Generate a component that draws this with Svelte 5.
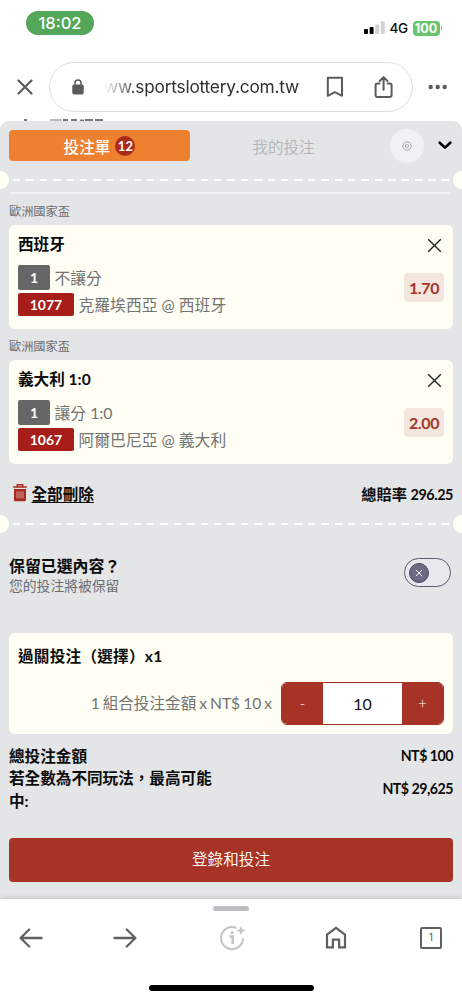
<script>
  let keepSelection = false;
  let stake = 10;

  const bets = [
    { league: "歐洲國家盃", pick: "西班牙", market: "不讓分", code: "1077", match: "克羅埃西亞 @ 西班牙", odds: "1.70" },
    { league: "歐洲國家盃", pick: "義大利 1:0", market: "讓分 1:0", code: "1067", match: "阿爾巴尼亞 @ 義大利", odds: "2.00" },
  ];
</script>

<div class="phone">
  <div class="status">
    <span class="clock">18:02</span>
    <div class="signal">
      <svg width="21" height="14" viewBox="0 0 21 14">
        <rect x="0" y="8" width="4" height="5" rx="1" fill="#000" />
        <rect x="5.6" y="6" width="4" height="7" rx="1" fill="#000" />
        <rect x="11.2" y="3.5" width="4" height="9.5" rx="1" fill="#d2d2d2" />
        <rect x="16.8" y="0.5" width="4" height="12.5" rx="1" fill="#d2d2d2" />
      </svg>
      <span class="network">4G</span>
      <span class="battery">100</span>
      <span class="battery-tip"></span>
    </div>
  </div>

  <div class="toolbar">
    <svg class="close-tab" width="16" height="16" viewBox="0 0 16 16">
      <path d="M1.5 1.5l13 13M14.5 1.5l-13 13" stroke="#5a5b5f" stroke-width="2.2" stroke-linecap="round" />
    </svg>
    <div class="address">
      <svg class="lock" width="12" height="16" viewBox="0 0 12 16">
        <rect x="0.3" y="5.6" width="11.4" height="9.8" rx="1.6" fill="#5a5b5f" />
        <path d="M3 6V4a3 3 0 0 1 6 0v2" fill="none" stroke="#5a5b5f" stroke-width="1.5" />
      </svg>
      <span class="url">ww.sportslottery.com.tw</span>
      <svg class="bookmark" width="18" height="22" viewBox="0 0 18 22" fill="none" stroke="#5a5b5f" stroke-width="2" stroke-linejoin="round">
        <path d="M1.8 1.8h14.2v18l-7.1-3.6-7.1 3.6z" />
      </svg>
      <svg class="share" width="20" height="24" viewBox="0 0 20 24" fill="none" stroke="#5a5b5f" stroke-width="2" stroke-linecap="round" stroke-linejoin="round">
        <path d="M5.6 8.6H3.4a1.8 1.8 0 0 0-1.8 1.8v9.8A1.8 1.8 0 0 0 3.4 22h12.4a1.8 1.8 0 0 0 1.8-1.8v-9.8a1.8 1.8 0 0 0-1.8-1.8h-2.2M9.6 14.8V2.4M5.7 6l3.9-3.9L13.5 6" />
      </svg>
    </div>
    <svg class="more" width="20" height="6" viewBox="0 0 20 6" fill="#5a5b5f">
      <circle cx="2.7" cy="3" r="2.2" /><circle cx="9.7" cy="3" r="2.2" /><circle cx="16.7" cy="3" r="2.2" />
    </svg>
  </div>

  <!-- sliver of the page still visible above the slip -->
  <svg class="page-edge" width="462" height="9" viewBox="0 0 462 9" fill="#77787a">
    <path d="M24 7h3v2h-3zM50 7.5h12v1H50zM63 7h5v2h-5zM71 7h6v2h-6zM80 7.5h4v1.5h-4zM85 7h8v2h-8zM95 7h8v2h-8z" />
  </svg>

  <div class="slip">
    <div class="tabs">
      <div class="tab active">投注單 <span class="count">12</span></div>
      <div class="tab">我的投注</div>
      <div class="settings">
        <svg width="10" height="10" viewBox="0 0 10 10" fill="none" stroke="#a6a6a9" stroke-width="0.9">
          <path d="M4.1.7h1.8l.4 1.1 1.1-.4 1.2 1.2-.4 1.1 1.1.4v1.8l-1.1.4.4 1.1-1.2 1.2-1.1-.4-.4 1.1H4.1l-.4-1.1-1.1.4-1.2-1.2.4-1.1-1.1-.4V4.1l1.1-.4-.4-1.1 1.2-1.2 1.1.4z" />
          <circle cx="5" cy="5" r="1.6" />
        </svg>
      </div>
      <svg class="chevron" width="14" height="9" viewBox="0 0 14 9">
        <path d="M1.7 1.7L7 6.6l5.3-4.9" fill="none" stroke="#000" stroke-width="2.6" stroke-linecap="round" stroke-linejoin="round" />
      </svg>
    </div>

    <div class="tear"><span class="notch"></span><span class="dashes"></span><span class="notch"></span></div>
    <div class="rule"></div>

    {#each bets as bet}
      <div class="league">{bet.league}</div>
      <div class="card bet">
        <div class="bet-head">
          <span>{bet.pick}</span>
          <svg width="15" height="15" viewBox="0 0 15 15">
            <path d="M1.2 1.2l12.6 12.6M13.8 1.2L1.2 13.8" stroke="#222" stroke-width="1.35" />
          </svg>
        </div>
        <div class="bet-body">
          <div>
            <div class="line market"><span class="tag">1</span>{bet.market}</div>
            <div class="line match"><span class="tag code">{bet.code}</span>{bet.match}</div>
          </div>
          <span class="odds">{bet.odds}</span>
        </div>
      </div>
    {/each}

    <div class="totals">
      <div class="clear">
        <svg width="14" height="18" viewBox="0 0 14 18">
          <path d="M4.3 2.3V.8h5.4v1.5M.2 3h13.6" fill="none" stroke="#a92b1f" stroke-width="1.5" />
          <path d="M1 5h12v11a1.2 1.2 0 0 1-1.2 1.2H2.2A1.2 1.2 0 0 1 1 16z" fill="#a92b1f" />
          <path d="M4 7.4v7M6 7.4v7M8 7.4v7M10 7.4v7" stroke="#e0b9b5" stroke-width="0.8" />
        </svg>
        <span>全部刪除</span>
      </div>
      <div>總賠率 <span class="total-odds">296.25</span></div>
    </div>

    <div class="tear"><span class="notch"></span><span class="dashes"></span><span class="notch"></span></div>

    <div class="keep">
      <div>
        <div class="keep-title">保留已選內容？</div>
        <div class="keep-note">您的投注將被保留</div>
      </div>
      <div class="toggle" class:on={keepSelection}>
        <span class="knob">
          <svg width="8" height="8" viewBox="0 0 8 8">
            <path d="M.8.8l6.4 6.4M7.2.8L.8 7.2" stroke="#fff" stroke-width="1" />
          </svg>
        </span>
      </div>
    </div>

    <div class="card parlay">
      <div class="parlay-title">過關投注（選擇）x1</div>
      <div class="stake">
        <span>1 組合投注金額 x NT$ 10 x</span>
        <div class="stepper">
          <span class="step">-</span>
          <span class="amount">{stake}</span>
          <span class="step">+</span>
        </div>
      </div>
    </div>

    <div class="summary">
      <span>總投注金額</span><span class="money">NT$ 100</span>
    </div>
    <div class="summary">
      <span class="wrap">若全數為不同玩法，最高可能中:</span><span class="money">NT$ 29,625</span>
    </div>
    <div class="submit">登錄和投注</div>
  </div>

  <div class="bottom">
    <div class="handle"></div>
    <div class="nav">
      <svg width="24" height="20" viewBox="0 0 24 20" fill="none" stroke="#5f6064" stroke-width="2.3" stroke-linecap="round" stroke-linejoin="round">
        <path d="M22.6 10H1.8M10.2 1.5L1.6 10l8.6 8.5" />
      </svg>
      <svg class="forward" width="24" height="20" viewBox="0 0 24 20" fill="none" stroke="#5f6064" stroke-width="2.3" stroke-linecap="round" stroke-linejoin="round">
        <path d="M1.4 10h20.8M13.8 1.5l8.6 8.5-8.6 8.5" />
      </svg>
      <svg class="info" width="28" height="26" viewBox="0 0 28 26" fill="none" stroke="#c2c3c6" stroke-width="2">
        <path d="M16.6 2.7A11 11 0 1 0 24 14.2" stroke-linecap="round" />
        <path d="M10.5 11.5h3.2v7.5" stroke-width="2.4" />
        <path d="M13.2 6.3v2.7" stroke-width="2.8" />
        <path d="M22 0.8l1.3 3.4 3.4 1.3-3.4 1.3L22 10.2l-1.3-3.4-3.4-1.3 3.4-1.3z" fill="#c2c3c6" stroke="none" />
      </svg>
      <svg class="home" width="22" height="23" viewBox="0 0 22 23" fill="none" stroke="#5f6064" stroke-width="2.2">
        <path d="M2 21.3V8.5l9-6.7 9 6.7v12.8h-5.9v-7.6H7.9v7.6z" />
      </svg>
      <span class="tab-count">1</span>
    </div>
    <div class="home-bar"></div>
  </div>
</div>

<style>
  :global(body) {
    background: #fff;
  }

  .phone {
    width: 462px;
    height: 1000px;
    overflow: hidden;
    display: flex;
    flex-direction: column;
    background: #fff;
    font-family: Lato, "Noto Sans CJK TC", sans-serif;
    color: #0c0c0c;
  }

  .phone * {
    box-sizing: border-box;
  }

  svg {
    display: block;
    flex: none;
  }

  .status {
    height: 62px;
    flex: none;
    display: flex;
    justify-content: space-between;
    padding: 11px 20px 0 26px;
    font-family: Inter, sans-serif;
  }

  .clock {
    width: 68px;
    height: 24px;
    border-radius: 12px;
    background: #54a758;
    color: #fff;
    font-size: 16.5px;
    font-weight: 500;
    line-height: 25px;
    text-align: center;
  }

  .signal {
    display: flex;
    align-items: center;
    height: 34px;
  }

  .network {
    margin: 0 5px 0 5px;
    width: 18px;
    font-size: 13.5px;
    font-weight: 500;
    letter-spacing: -0.3px;
  }

  .battery {
    width: 27px;
    height: 15px;
    border-radius: 4px;
    background: #68c46c;
    color: #fff;
    font-size: 12.6px;
    font-weight: 700;
    line-height: 15px;
    text-align: center;
  }

  .battery-tip {
    width: 1.5px;
    height: 4px;
    margin-left: 1px;
    background: #68c46c;
  }

  .toolbar {
    height: 50px;
    flex: none;
    display: flex;
    align-items: center;
    padding-left: 16.5px;
  }

  .address {
    width: 364px;
    height: 50px;
    margin: 0 15px 0 16.5px;
    padding-left: 22px;
    display: flex;
    align-items: center;
    border: 1.5px solid #dedede;
    border-radius: 25px;
  }

  .url {
    width: 195px;
    margin: 0 27px 0 20px;
    font-family: Inter, sans-serif;
    font-size: 17.3px;
    line-height: 24px;
    letter-spacing: -0.22px;
    white-space: nowrap;
    color: #2e2e30;
    mask-image: linear-gradient(to right, transparent, #000 34px);
  }

  .share {
    margin-left: 30px;
  }

  .page-edge {
    height: 9px;
  }

  .slip {
    height: 778px;
    flex: none;
    border-radius: 9px 9px 0 0;
    background: #e4e5e7;
    overflow: hidden;
  }

  .tabs {
    height: 49px;
    display: flex;
    align-items: center;
    padding: 0 0 0 9px;
  }

  .tab {
    width: 187px;
    height: 31px;
    display: flex;
    align-items: center;
    justify-content: center;
    color: #b3b4b7;
    font-size: 15.6px;
    font-weight: 350;
  }

  .tab.active {
    width: 181px;
    gap: 5px;
    border-radius: 4px;
    background: #ee8130;
    color: #fff;
    font-weight: 500;
  }

  .count {
    width: 20px;
    height: 20px;
    border-radius: 50%;
    background: #aa2b1b;
    font-size: 13px;
    font-weight: 700;
    line-height: 20px;
    text-align: center;
  }

  .settings {
    width: 34px;
    height: 34px;
    margin: 0 14px 0 13px;
    display: flex;
    align-items: center;
    justify-content: center;
    border-radius: 50%;
    background: #f1f1f3;
  }

  .tear {
    height: 18px;
    display: flex;
    align-items: center;
    justify-content: space-between;
    margin: 1px -9px 0;
  }

  .notch {
    width: 18px;
    height: 18px;
    border-radius: 50%;
    background: #fffff5;
  }

  .dashes {
    width: 436px;
    height: 2.5px;
    background: repeating-linear-gradient(to right, #fff 0 7.4px, transparent 7.4px 13.4px);
  }

  .rule {
    height: 2px;
    margin: 3px 11px 10px 11px;
    background: #f1f2f3;
  }

  .league {
    height: 18px;
    margin: 0 9px 3px;
    font-size: 12.2px;
    line-height: 16px;
    color: #6d6d70;
  }

  .card {
    margin: 0 9px;
    border-radius: 6px;
    background: #fefef4;
  }

  .bet {
    height: 104px;
    padding: 8px 9px 0;
    margin-bottom: 10px;
  }

  .bet-head {
    height: 24px;
    display: flex;
    align-items: center;
    justify-content: space-between;
    padding-right: 2px;
    font-size: 15.6px;
    font-weight: 700;
    line-height: 20px;
  }

  .bet-head span {
    margin-bottom: 3px;
  }

  .bet-body {
    display: flex;
    justify-content: space-between;
    align-items: flex-start;
    padding-top: 8px;
  }

  .line {
    display: flex;
    align-items: center;
    font-size: 15.8px;
    font-weight: 400;
    line-height: 22px;
    color: #737373;
    white-space: nowrap;
  }

  .market {
    height: 25px;
    margin-bottom: 3px;
  }

  .match {
    height: 23px;
  }

  .tag {
    width: 32px;
    height: 25px;
    margin-right: 4.5px;
    border-radius: 2px;
    background: #666;
    color: #fff;
    font-size: 14px;
    font-weight: 700;
    line-height: 25px;
    text-align: center;
  }

  .tag.code {
    width: 56px;
    height: 23px;
    background: #a61e17;
    line-height: 23px;
  }

  .odds {
    width: 40px;
    height: 29px;
    margin-top: 8px;
    border-radius: 4px;
    background: #f2e6de;
    color: #a63427;
    font-size: 16px;
    font-weight: 700;
    line-height: 29px;
    letter-spacing: -0.4px;
    text-align: center;
  }

  .totals {
    height: 40px;
    display: flex;
    justify-content: space-between;
    align-items: center;
    padding: 0 9px 2px 13px;
    font-size: 15.2px;
    font-weight: 700;
  }

  .clear {
    display: flex;
    align-items: center;
    gap: 4.5px;
    font-size: 15.6px;
    text-decoration: underline;
    text-underline-offset: 2px;
  }

  .total-odds {
    font-size: 14.4px;
    letter-spacing: -0.45px;
  }

  .keep {
    display: flex;
    justify-content: space-between;
    height: 100px;
    padding: 22px 11px 0 9px;
  }

  .keep-title {
    font-size: 15.9px;
    font-weight: 700;
    line-height: 21px;
  }

  .keep-note {
    font-size: 13.8px;
    line-height: 20px;
    color: #6d6d70;
  }

  .toggle {
    width: 47px;
    height: 29px;
    margin-top: 3px;
    padding: 0 3.5px;
    display: flex;
    align-items: center;
    border: 1px solid #5b5870;
    border-radius: 15px;
    background: #e9e8ef;
  }

  .toggle.on {
    justify-content: flex-end;
  }

  .knob {
    width: 20px;
    height: 20px;
    display: flex;
    align-items: center;
    justify-content: center;
    border: 1px solid #4a465e;
    border-radius: 50%;
    background: #6e6a86;
  }

  .parlay {
    height: 101px;
    padding: 12px 9px 0;
  }

  .parlay-title {
    height: 37px;
    font-size: 15.6px;
    font-weight: 700;
    line-height: 22px;
    letter-spacing: 0.25px;
  }

  .stake {
    display: flex;
    align-items: center;
    justify-content: flex-end;
    gap: 9px;
    font-size: 15.6px;
    font-weight: 400;
    line-height: 20px;
    word-spacing: -1px;
    color: #737373;
  }

  .stake > span {
    margin-bottom: 2px;
  }

  .stepper {
    width: 163px;
    height: 43px;
    display: flex;
    border: 1px solid #a73226;
    border-radius: 6px;
    overflow: hidden;
    line-height: 41px;
    text-align: center;
  }

  .step {
    width: 41px;
    background: #a73226;
    color: #fff;
    font-weight: 300;
  }

  .amount {
    flex: 1;
    background: #fff;
    color: #111;
    font-size: 16px;
  }

  .summary {
    display: flex;
    justify-content: space-between;
    align-items: center;
    padding: 0 9px;
    font-size: 15.6px;
    font-weight: 700;
    line-height: 22.3px;
  }

  .parlay + .summary {
    margin-top: 11px;
  }

  .wrap {
    width: 212px;
  }

  .money {
    font-size: 14.2px;
    letter-spacing: -0.5px;
  }

  .submit {
    height: 44px;
    margin: 26px 9px 0;
    border-radius: 4px;
    background: #a73226;
    color: #fff;
    font-size: 15.6px;
    font-weight: 350;
    line-height: 43px;
    text-align: center;
  }

  .bottom {
    height: 101px;
    flex: none;
    display: flex;
    flex-direction: column;
    align-items: center;
    padding-top: 7px;
    background: #fff;
    box-shadow: 0 0 7px rgba(0, 0, 0, 0.2);
    z-index: 1;
  }

  .handle {
    width: 36px;
    height: 5px;
    border-radius: 2.5px;
    background: #bdbec2;
  }

  .nav {
    width: 100%;
    height: 53px;
    display: flex;
    align-items: center;
    padding-left: 19px;
  }

  .forward {
    margin-left: 70px;
  }

  .info {
    margin-left: 82px;
  }

  .home {
    margin-left: 78px;
  }

  .tab-count {
    width: 22px;
    height: 22px;
    margin-left: 73px;
    border: 2px solid #5f6064;
    border-radius: 2px;
    font-family: Inter, sans-serif;
    font-size: 10.5px;
    line-height: 18px;
    text-align: center;
    color: #5f6064;
  }

  .home-bar {
    width: 165px;
    height: 5.5px;
    margin-top: 21px;
    border-radius: 3px;
    background: #000;
  }
</style>
